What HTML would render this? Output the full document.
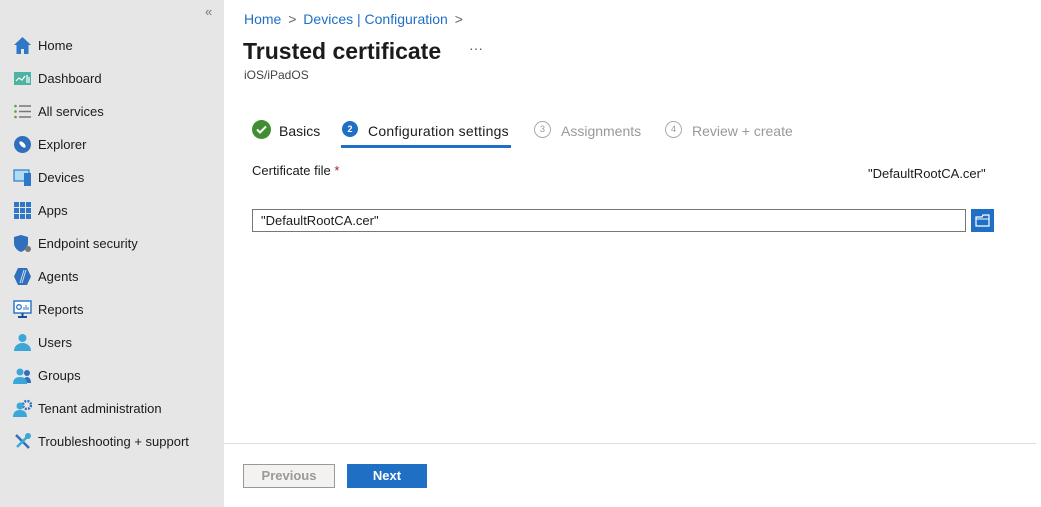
<!DOCTYPE html>
<html><head><style>
*{margin:0;padding:0;box-sizing:border-box}
body{width:1041px;height:507px;overflow:hidden;background:#fff;font-family:"Liberation Sans",sans-serif;position:relative;color:#1b1b1b}
.side{position:absolute;left:0;top:0;width:224px;height:507px;background:#e6e6e6}
.item{position:absolute;left:13px;height:20px;display:flex;align-items:center;font-size:13px;color:#1b1b1b}
.item svg{width:19px;height:19px;margin-right:6px;flex:none}
.a{position:absolute;white-space:nowrap}
</style></head><body>
<div class="side">
<div class="a" style="left:205px;top:4px;color:#777;font-size:13px">«</div>
<div class="item" style="top:35px"><svg viewBox="0 0 19 19"><path d="M9.5 1L1 9h2.5v9h4.5v-5h3v5h4.5V9H18z" fill="#2f78c8"/></svg>Home</div>
<div class="item" style="top:68px"><svg viewBox="0 0 19 19"><rect x="1" y="3" width="17" height="13" fill="#4db3a2"/><path d="M3 12l3-3 3 2 3-4M14 6v8M16 8v6" stroke="#fff" stroke-width="1.2" fill="none"/></svg>Dashboard</div>
<div class="item" style="top:101px"><svg viewBox="0 0 19 19"><circle cx="2.5" cy="4" r="1.3" fill="#5aa03c"/><circle cx="2.5" cy="9.5" r="1.3" fill="#5aa03c"/><circle cx="2.5" cy="15" r="1.3" fill="#5aa03c"/><path d="M6 4h12M6 9.5h12M6 15h12" stroke="#777" stroke-width="1.4"/></svg>All services</div>
<div class="item" style="top:134px"><svg viewBox="0 0 19 19"><circle cx="9.5" cy="9.5" r="8.5" fill="#2f6fbe"/><ellipse cx="9.5" cy="9.5" rx="4" ry="2" transform="rotate(45 9.5 9.5)" fill="#fff"/></svg>Explorer</div>
<div class="item" style="top:167px"><svg viewBox="0 0 19 19"><rect x="1" y="2" width="15" height="11" fill="#aedcf4" stroke="#2f78c8" stroke-width="1.2"/><rect x="11" y="5" width="7" height="13" fill="#2f78c8"/></svg>Devices</div>
<div class="item" style="top:200px"><svg viewBox="0 0 19 19"><g fill="#2f78c8"><rect x="1" y="1" width="5" height="5"/><rect x="7" y="1" width="5" height="5"/><rect x="13" y="1" width="5" height="5"/><rect x="1" y="7" width="5" height="5"/><rect x="7" y="7" width="5" height="5"/><rect x="13" y="7" width="5" height="5"/><rect x="1" y="13" width="5" height="5"/><rect x="7" y="13" width="5" height="5"/><rect x="13" y="13" width="5" height="5"/></g></svg>Apps</div>
<div class="item" style="top:233px"><svg viewBox="0 0 19 19"><path d="M8 1L1 3v6c0 5 4 8 7 9 3-1 7-4 7-9V3z" fill="#2f6fbe"/><circle cx="15" cy="15" r="3" fill="#777"/></svg>Endpoint security</div>
<div class="item" style="top:266px"><svg viewBox="0 0 19 19"><path d="M5 1h9l4 8.5-4 8.5H5l-4-8.5z" fill="#2f6fbe"/><path d="M11 3l-4 13M13 3l-4 13" stroke="#cde" stroke-width="1"/></svg>Agents</div>
<div class="item" style="top:299px"><svg viewBox="0 0 19 19"><rect x="1" y="1" width="17" height="12" fill="#fff" stroke="#2f78c8" stroke-width="1.5"/><circle cx="6" cy="7" r="2.3" fill="none" stroke="#2f78c8" stroke-width="1.3"/><path d="M11 10V7M13 10V5M15 10V7" stroke="#2f78c8"/><path d="M9.5 13v3M5 17h9" stroke="#1a4f8f" stroke-width="2"/></svg>Reports</div>
<div class="item" style="top:332px"><svg viewBox="0 0 19 19"><circle cx="9.5" cy="5" r="4" fill="#3aa7d8"/><path d="M1 18c0-5 4-8 8.5-8S18 13 18 18z" fill="#3aa7d8"/></svg>Users</div>
<div class="item" style="top:365px"><svg viewBox="0 0 19 19"><circle cx="14" cy="7" r="3" fill="#2f6fbe"/><path d="M10 17c0-4 2-6 4-6s4 2 4 6z" fill="#2f6fbe"/><circle cx="7" cy="6" r="3.5" fill="#3aa7d8"/><path d="M0 18c0-5 3-7 7-7s7 2 7 7z" fill="#3aa7d8"/></svg>Groups</div>
<div class="item" style="top:398px"><svg viewBox="0 0 19 19"><circle cx="14" cy="6" r="4" fill="none" stroke="#2f6fbe" stroke-width="2.5" stroke-dasharray="2 1.2"/><circle cx="7" cy="7" r="3.5" fill="#3aa7d8"/><path d="M0 18c0-5 3-7 7-7s7 2 7 7z" fill="#3aa7d8"/></svg>Tenant administration</div>
<div class="item" style="top:431px"><svg viewBox="0 0 19 19"><path d="M3 3l13 13" stroke="#2f6fbe" stroke-width="2.5"/><path d="M16 3L4 15" stroke="#3aa7d8" stroke-width="2.5"/><circle cx="15" cy="4" r="3" fill="#3aa7d8"/></svg>Troubleshooting + support</div>
</div>

<div class="a" style="left:244px;top:11px;font-size:14px;color:#1f6fc5">Home <span style="color:#666;margin:0 3px">&gt;</span> Devices | Configuration <span style="color:#666;margin-left:3px">&gt;</span></div>
<div class="a" style="left:243px;top:38px;font-size:23px;font-weight:bold;color:#1b1b1b">Trusted certificate</div>
<div class="a" style="left:469px;top:40px;font-size:14px;color:#555">···</div>
<div class="a" style="left:244px;top:68px;font-size:12px;color:#444">iOS/iPadOS</div>

<svg class="a" style="left:252px;top:120px" width="19" height="19"><circle cx="9.5" cy="9.5" r="9.5" fill="#3f8f32"/><path d="M5 9.5l3 3 6-6" stroke="#fff" stroke-width="2" fill="none"/></svg>
<div class="a" style="left:279px;top:123px;font-size:14px">Basics</div>
<div class="a" style="left:342px;top:121px;width:16px;height:16px;border-radius:50%;background:#1f6fc5;color:#fff;font-size:9px;font-weight:bold;text-align:center;line-height:16px">2</div>
<div class="a" style="left:368px;top:123px;font-size:14px;letter-spacing:0.25px;color:#1b1b1b">Configuration settings</div>
<div class="a" style="left:341px;top:145px;width:170px;height:3px;background:#1f6fc5"></div>
<div class="a" style="left:534px;top:121px;width:17px;height:17px;border-radius:50%;border:1px solid #aaa;color:#999;font-size:9px;text-align:center;line-height:15px">3</div>
<div class="a" style="left:561px;top:123px;font-size:14px;color:#999">Assignments</div>
<div class="a" style="left:665px;top:121px;width:17px;height:17px;border-radius:50%;border:1px solid #aaa;color:#999;font-size:9px;text-align:center;line-height:15px">4</div>
<div class="a" style="left:692px;top:123px;font-size:14px;color:#999">Review + create</div>

<div class="a" style="left:252px;top:163px;font-size:13px">Certificate file <span style="color:#a4262c">*</span></div>
<div class="a" style="left:868px;top:166px;font-size:13px">"DefaultRootCA.cer"</div>
<div class="a" style="left:252px;top:209px;width:714px;height:23px;border:1px solid #777;font-size:13px;padding:3px 8px">"DefaultRootCA.cer"</div>
<div class="a" style="left:971px;top:209px;width:23px;height:23px;background:#1f6fc5"><svg width="23" height="23"><path d="M5 8h6l1-2h6v11H5z" fill="none" stroke="#fff" stroke-width="1.2"/><path d="M5 10h13" stroke="#fff" stroke-width="1"/></svg></div>

<div class="a" style="left:224px;top:443px;width:812px;height:1px;background:#ddd"></div>
<div class="a" style="left:243px;top:464px;width:92px;height:24px;border:1px solid #999;background:#f3f2f1;color:#999;font-size:13px;font-weight:bold;text-align:center;line-height:22px">Previous</div>
<div class="a" style="left:347px;top:464px;width:80px;height:24px;background:#1f6fc5;color:#fff;font-size:13px;font-weight:bold;text-align:center;line-height:24px">Next</div>
</body></html>
